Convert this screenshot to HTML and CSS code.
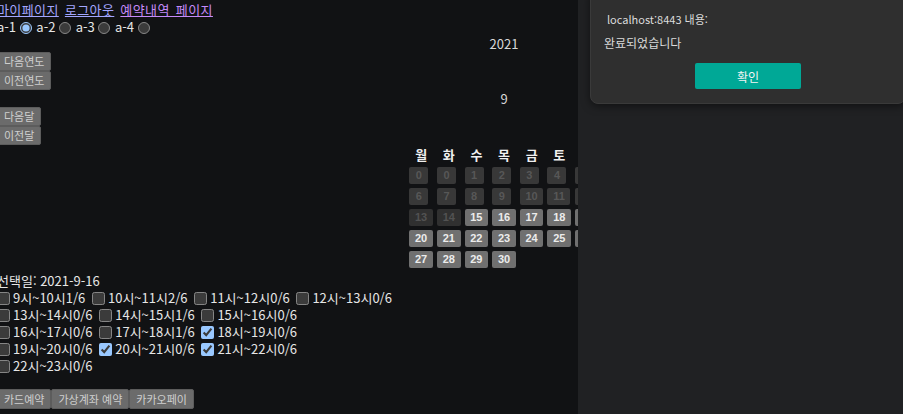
FILE: index.html
```html
<!DOCTYPE html>
<html lang="ko">
<head>
    <meta charset="UTF-8">
    <meta name="viewport" content="width=device-width, initial-scale=1.0">
    <title>예약</title>
    <link rel="stylesheet" href="styles.css">
</head>
<body>
    <div class="page">
        <div class="content">
            <div class="links">
                <a href="#">마이페이지</a> <a href="#">로그아웃</a> <a href="#" class="visited">예약내역 페이지</a>
            </div>
            <div class="rooms">
                a-1 <input type="radio" name="room" checked>
                a-2 <input type="radio" name="room">
                a-3 <input type="radio" name="room">
                a-4 <input type="radio" name="room">
            </div>

            <div class="center-label">2021</div>
            <button class="nav-btn">다음연도</button>
            <button class="nav-btn">이전연도</button>

            <div class="center-label">9</div>
            <button class="nav-btn">다음달</button>
            <button class="nav-btn">이전달</button>

            <table class="calendar">
                <tr>
                    <th>월</th><th>화</th><th>수</th><th>목</th><th>금</th><th>토</th><th>일</th>
                </tr>
                <tr>
                    <td><button class="day" disabled>0</button></td>
                    <td><button class="day" disabled>0</button></td>
                    <td><button class="day" disabled>1</button></td>
                    <td><button class="day" disabled>2</button></td>
                    <td><button class="day" disabled>3</button></td>
                    <td><button class="day" disabled>4</button></td>
                    <td><button class="day" disabled>5</button></td>
                </tr>
                <tr>
                    <td><button class="day" disabled>6</button></td>
                    <td><button class="day" disabled>7</button></td>
                    <td><button class="day" disabled>8</button></td>
                    <td><button class="day" disabled>9</button></td>
                    <td><button class="day" disabled>10</button></td>
                    <td><button class="day" disabled>11</button></td>
                    <td><button class="day" disabled>12</button></td>
                </tr>
                <tr>
                    <td><button class="day past" disabled>13</button></td>
                    <td><button class="day past" disabled>14</button></td>
                    <td><button class="day">15</button></td>
                    <td><button class="day">16</button></td>
                    <td><button class="day">17</button></td>
                    <td><button class="day">18</button></td>
                    <td><button class="day">19</button></td>
                </tr>
                <tr>
                    <td><button class="day">20</button></td>
                    <td><button class="day">21</button></td>
                    <td><button class="day">22</button></td>
                    <td><button class="day">23</button></td>
                    <td><button class="day">24</button></td>
                    <td><button class="day">25</button></td>
                    <td><button class="day">26</button></td>
                </tr>
                <tr>
                    <td><button class="day">27</button></td>
                    <td><button class="day">28</button></td>
                    <td><button class="day">29</button></td>
                    <td><button class="day">30</button></td>
                </tr>
            </table>

            <div class="selected">선택일: 2021-9-16</div>
            <div class="times">
                <label><input type="checkbox">9시~10시1/6</label>
                <label><input type="checkbox">10시~11시2/6</label>
                <label><input type="checkbox">11시~12시0/6</label>
                <label><input type="checkbox">12시~13시0/6</label><br>
                <label><input type="checkbox">13시~14시0/6</label>
                <label><input type="checkbox">14시~15시1/6</label>
                <label><input type="checkbox">15시~16시0/6</label><br>
                <label><input type="checkbox">16시~17시0/6</label>
                <label><input type="checkbox">17시~18시1/6</label>
                <label><input type="checkbox" checked>18시~19시0/6</label><br>
                <label><input type="checkbox">19시~20시0/6</label>
                <label><input type="checkbox" checked>20시~21시0/6</label>
                <label><input type="checkbox" checked>21시~22시0/6</label><br>
                <label><input type="checkbox">22시~23시0/6</label>
            </div>

            <div class="pay"><button class="pay-btn">카드예약</button><button class="pay-btn">가상계좌 예약</button><button class="pay-btn">카카오페이</button></div>
        </div>
    </div>

    <div class="side">
        <div class="dialog">
            <div class="dialog-origin">localhost:8443 내용:</div>
            <div class="dialog-message">완료되었습니다</div>
            <div class="dialog-actions">
                <button class="dialog-ok">확인</button>
            </div>
        </div>
    </div>
</body>
</html>
```

FILE: styles.css
```css
:root {
    color-scheme: dark;
}
body {
    margin: 0;
    padding: 0;
    display: flex;
    height: 414px;
    overflow: hidden;
    background-color: #111214;
    font-family: "Noto Sans CJK KR", "Noto Sans", sans-serif;
    font-size: 13px;
    line-height: 17px;
    color: #e6e6e6;
}
.page {
    width: 578px;
    flex-shrink: 0;
    overflow: hidden;
}
.content {
    width: 1014px;
    margin-left: -3px;
    padding-top: 1px;
}
.links {
    letter-spacing: 0.4px;
    word-spacing: 2px;
}
.links a {
    color: #a3a6ff;
}
.links a.visited {
    color: #c58af9;
}
.rooms input {
    width: 12px;
    height: 12px;
    margin: 0 1px 0 0;
    vertical-align: -2px;
}
.center-label {
    text-align: center;
    color: #d8d8d8;
}
.nav-btn {
    display: block;
    height: 19px;
    padding: 0 6px;
    margin: 0;
    background: #6b6b6b;
    color: #cfcfcf;
    border: 1px solid #5c5c5c;
    border-radius: 2px;
    font-family: "Noto Sans CJK KR", sans-serif;
    font-size: 11px;
    line-height: 17px;
}
.calendar {
    margin: -2px auto 0;
    border-spacing: 2px;
}
.calendar th {
    padding: 1px;
    font-size: 13px;
    font-weight: bold;
    color: #f0f0f0;
    line-height: 17px;
}
.calendar td {
    padding: 1px;
    text-align: left;
}
.day {
    height: 17px;
    min-width: 19px;
    padding: 0 5.7px;
    margin: 0;
    border: 0;
    border-radius: 2px;
    background: #707070;
    color: #ececec;
    font-family: "Liberation Sans", Arial, sans-serif;
    font-size: 11px;
    font-weight: bold;
    line-height: 17px;
    display: block;
}
.day:disabled {
    background: #383838;
    color: #575757;
}
.day.past {
    background: #303030;
    color: #525252;
}
.selected {
    margin-top: 1px;
}
.times {
    margin-left: -3px;
}
.times input {
    width: 13px;
    height: 13px;
    margin: 0 3px 0 3px;
    vertical-align: -2px;
}
.pay {
    display: flex;
    margin-top: 15px;
}
.pay-btn {
    height: 20px;
    padding: 0 6px;
    margin: 0;
    background: #6b6b6b;
    color: #cfcfcf;
    border: 1px solid #5c5c5c;
    border-radius: 2px;
    font-family: "Noto Sans CJK KR", sans-serif;
    font-size: 11px;
    line-height: 18px;
}
.side {
    flex: 1;
    background: #202123;
    padding-left: 12px;
}
.dialog {
    width: 316px;
    margin-top: -10px;
    padding: 20px 0 14px 13px;
    background: #2f2f2f;
    border: 1px solid #3a3a3a;
    border-radius: 8px;
    box-shadow: 0 2px 8px rgba(0, 0, 0, 0.5);
    box-sizing: border-box;
    font-size: 11px;
    line-height: 16px;
    color: #dcdcdc;
}
.dialog-origin {
    margin-left: 3px;
}
.dialog-message {
    margin-top: 8px;
    font-size: 12px;
}
.dialog-actions {
    margin-top: 12px;
    padding-right: 13px;
    text-align: center;
}
.dialog-ok {
    width: 106px;
    height: 26px;
    border: 0;
    border-radius: 2px;
    background: #00a896;
    color: #f4f4f4;
    font-family: "Noto Sans CJK KR", sans-serif;
    font-size: 12px;
}
```
